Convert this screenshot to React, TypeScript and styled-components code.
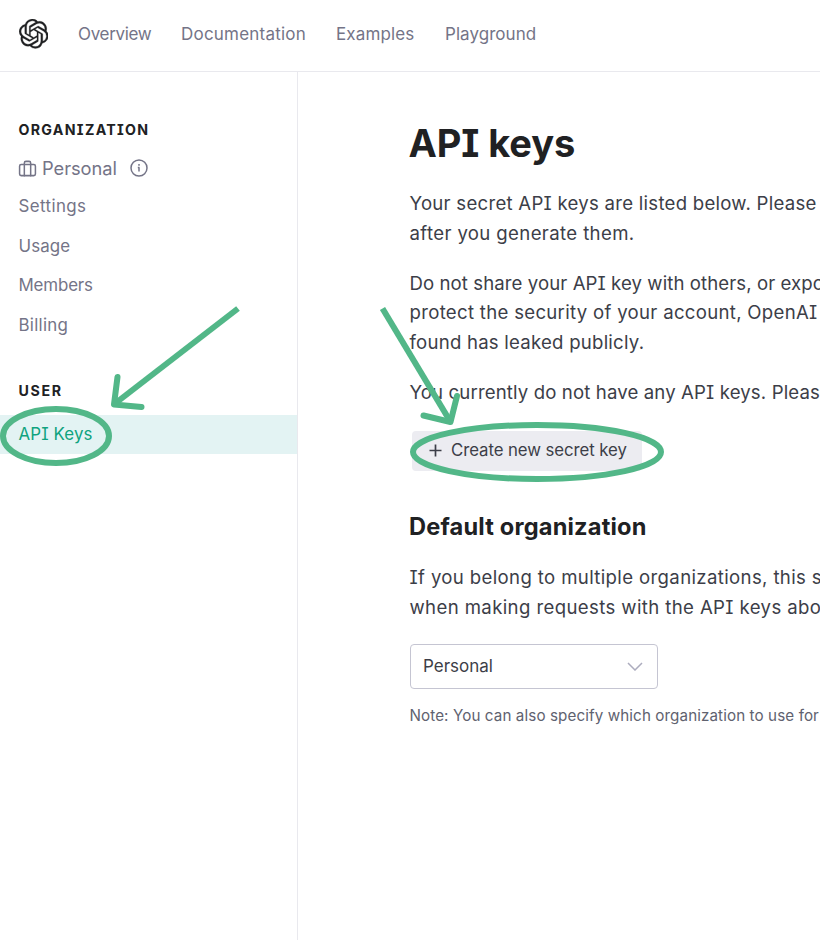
import React from 'react';
import styled, { createGlobalStyle } from 'styled-components';
import { FiBriefcase } from 'react-icons/fi';
import { SiOpenai } from 'react-icons/si';

const GlobalStyle = createGlobalStyle`
  * { box-sizing: border-box; }
  body {
    margin: 0;
    background: #fff;
    color: #3c3e48;
    font-family: Inter, "Liberation Sans", sans-serif;
    font-feature-settings: "cv08";
    overflow: hidden;
  }
`;

const Page = styled.div`
  position: relative;
  display: flex;
  flex-direction: column;
  width: 820px;
  height: 940px;
  overflow: hidden;
`;

const Header = styled.header`
  display: flex;
  align-items: center;
  flex: none;
  height: 72px;
  padding: 0 0 3px 18.5px;
  border-bottom: 1px solid #e9e9ee;
`;

const Logo = styled(SiOpenai)`
  width: 29.5px;
  height: 29.5px;
  margin-right: 30px;
  color: #202123;
  stroke: #202123;
  stroke-width: 0.2;
`;

const Nav = styled.nav`
  display: flex;
  gap: 30px;
`;

const NavLink = styled.a<{ $width: number; $spacing: number }>`
  width: ${(p) => p.$width}px;
  font-size: 17px;
  line-height: 24px;
  letter-spacing: ${(p) => p.$spacing}px;
  white-space: nowrap;
  color: #747487;
`;

const Body = styled.div`
  display: flex;
  flex: 1;
  min-height: 0;
`;

const Sidebar = styled.aside`
  flex: none;
  width: 298px;
  padding-top: 48px;
  border-right: 1px solid #e9e9ee;
`;

const SectionTitle = styled.h2<{ $spacing: number }>`
  margin: 0;
  padding-left: 18.5px;
  font-size: 14.2px;
  font-weight: 700;
  line-height: 20px;
  letter-spacing: ${(p) => p.$spacing}px;
  color: #202123;
`;

const OrgRow = styled.div`
  display: flex;
  align-items: center;
  height: 36px;
  margin-top: 10px;
  padding-left: 18px;
  color: #747487;
`;

const Briefcase = styled(FiBriefcase)`
  width: 19px;
  height: 19px;
  stroke-width: 1.9;
`;

const OrgName = styled.span`
  width: 77px;
  margin: 0 11px 0 5px;
  font-size: 18.3px;
  letter-spacing: -0.05px;
`;

const MenuItem = styled.a<{ $active?: boolean; $spacing?: number }>`
  display: block;
  height: 39.7px;
  padding-left: 18.5px;
  font-size: 16.9px;
  line-height: ${(p) => (p.$active ? 38.5 : 40)}px;
  letter-spacing: ${(p) => p.$spacing ?? 0}px;
  color: ${(p) => (p.$active ? '#10a37f' : '#747487')};
  background: ${(p) => (p.$active ? '#e3f3f3' : 'transparent')};
`;

const UserSection = styled.section`
  padding-top: 36.5px;
  ${SectionTitle} { margin-bottom: 13.5px; }
`;

const Main = styled.main`
  flex: 1;
  min-width: 0;
  padding: 48px 0 0 111.5px;
`;

const Title = styled.h1`
  margin: 0;
  font-size: 38px;
  font-weight: 700;
  line-height: 46px;
  letter-spacing: -0.1px;
  text-indent: -1px;
  color: #202123;
`;

const Subtitle = styled.h2`
  margin: 40px 0 0;
  font-size: 23.6px;
  font-weight: 700;
  line-height: 32px;
  letter-spacing: 0.18px;
  text-indent: -0.5px;
  color: #202123;
`;

const Paragraph = styled.p<{ $top: number }>`
  margin: ${(p) => p.$top}px 0 0;
`;

const Line = styled.span<{ $spacing: number }>`
  display: block;
  font-size: 18.6px;
  line-height: 29.7px;
  letter-spacing: ${(p) => p.$spacing}px;
  white-space: nowrap;
`;

const CreateButton = styled.button`
  display: flex;
  align-items: center;
  width: 230px;
  height: 40px;
  margin: 23.5px 0 0 2.5px;
  padding: 0 0 2px 17px;
  gap: 9px;
  border: 0;
  border-radius: 4px;
  background: #ececf1;
  color: #3c3e48;
  font: inherit;
  font-feature-settings: inherit;
  font-size: 16.8px;
  letter-spacing: -0.07px;
  white-space: nowrap;
`;

const Select = styled.div`
  display: flex;
  align-items: center;
  justify-content: space-between;
  width: 248px;
  height: 45px;
  margin-top: 21px;
  padding: 0 14px 0 12.5px;
  border: 1.5px solid #c5c5d2;
  border-radius: 4px;
  font-size: 17px;
`;

const Note = styled.p`
  margin: 16px 0 0;
  font-size: 15.2px;
  line-height: 22px;
  letter-spacing: 0.1px;
  white-space: nowrap;
  color: #60626f;
`;

const Annotations = styled.svg`
  position: absolute;
  inset: 0;
  pointer-events: none;
  fill: none;
  stroke: #52b788;
  stroke-width: 6;
  stroke-linejoin: round;
`;

const InfoIcon = () => (
  <svg width="18" height="18" viewBox="0 0 18 18" fill="none" stroke="currentColor" strokeWidth="1.5">
    <circle cx="9" cy="9" r="8" />
    <path d="M9 8.2v4.3M9 5v1.7M7.8 8.4h1.6" strokeWidth="1.5" />
  </svg>
);

const PlusIcon = () => (
  <svg width="13" height="13" viewBox="0 0 13 13" stroke="currentColor" strokeWidth="1.7">
    <path d="M6.5.5v12M.5 6.5h12" />
  </svg>
);

const ChevronIcon = () => (
  <svg width="16" height="10" viewBox="0 0 16 10" fill="none" stroke="#acacbe" strokeWidth="1.5">
    <path d="M1 2l7 7 7-7" />
  </svg>
);

export default function App() {
  return (
    <>
      <GlobalStyle />
      <Page>
        <Header>
          <Logo />
          <Nav>
            <NavLink $width={73} $spacing={-0.33}>Overview</NavLink>
            <NavLink $width={125} $spacing={0.22}>Documentation</NavLink>
            <NavLink $width={79} $spacing={0.13}>Examples</NavLink>
            <NavLink $width={92} $spacing={0.05}>Playground</NavLink>
          </Nav>
        </Header>
        <Body>
          <Sidebar>
            <SectionTitle $spacing={1.3}>ORGANIZATION</SectionTitle>
            <OrgRow>
              <Briefcase />
              <OrgName>Personal</OrgName>
              <InfoIcon />
            </OrgRow>
            <MenuItem $spacing={0.4}>Settings</MenuItem>
            <MenuItem $spacing={0.1}>Usage</MenuItem>
            <MenuItem $spacing={-0.15}>Members</MenuItem>
            <MenuItem $spacing={0.28}>Billing</MenuItem>
            <UserSection>
              <SectionTitle $spacing={1.65}>USER</SectionTitle>
              <MenuItem $active $spacing={0.1}>API Keys</MenuItem>
            </UserSection>
          </Sidebar>
          <Main>
            <Title>API keys</Title>
            <Paragraph $top={23.3}>
              <Line $spacing={0.26}>Your secret API keys are listed below. Please</Line>
              <Line $spacing={0.37}>after you generate them.</Line>
            </Paragraph>
            <Paragraph $top={20}>
              <Line $spacing={0.08}>Do not share your API key with others, or expo</Line>
              <Line $spacing={0.3}>protect the security of your account, OpenAI</Line>
              <Line $spacing={0.23}>found has leaked publicly.</Line>
            </Paragraph>
            <Paragraph $top={20}>
              <Line $spacing={0.13}>You currently do not have any API keys. Pleas</Line>
            </Paragraph>
            <CreateButton>
              <PlusIcon />
              Create new secret key
            </CreateButton>
            <Subtitle>Default organization</Subtitle>
            <Paragraph $top={20.3}>
              <Line $spacing={0.36}>If you belong to multiple organizations, this s</Line>
              <Line $spacing={0.38}>when making requests with the API keys abo</Line>
            </Paragraph>
            <Select>
              Personal
              <ChevronIcon />
            </Select>
            <Note>Note: You can also specify which organization to use for</Note>
          </Main>
        </Body>
        <Annotations width="820" height="940" viewBox="0 0 820 940">
          <ellipse cx="56" cy="436" rx="53" ry="27" />
          <path d="M238 308.5L115 403.5" />
          <path d="M117.5 377L114 404.5L141.5 407" strokeLinecap="round" />
          <ellipse cx="537" cy="452" rx="124" ry="27" />
          <path d="M382.5 308.5L450 421" />
          <path d="M423.5 415.5L450.5 422L457 396" strokeLinecap="round" />
        </Annotations>
      </Page>
    </>
  );
}
